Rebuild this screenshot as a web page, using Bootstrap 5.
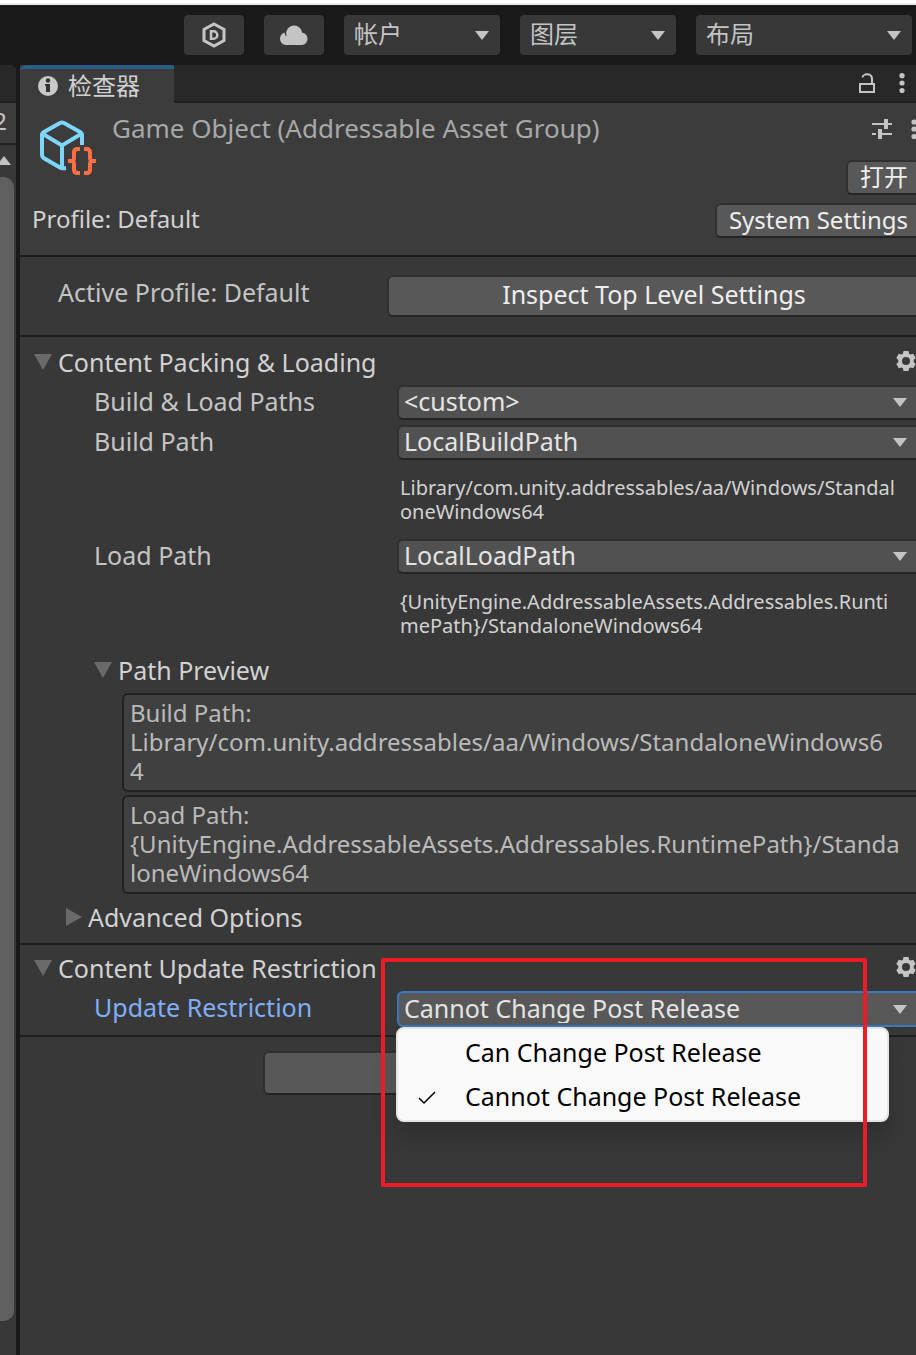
<!DOCTYPE html>
<html lang="zh-CN">
<head>
<meta charset="utf-8">
<meta name="viewport" content="width=device-width, initial-scale=1">
<title>检查器</title>
<link href="https://cdn.jsdelivr.net/npm/bootstrap@5.3.0/dist/css/bootstrap.min.css" rel="stylesheet">
<style>
  body {
    background: #191919;
    color: #d2d2d2;
    font-family: "Noto Sans", "Noto Sans CJK SC", sans-serif;
    font-size: 24px;
    line-height: 30px;
    border-top: 3px solid #fff;
  }
  .app-toolbar { height: 62px; border-top: 2px solid #ececec; padding: 10px 4px 10px 0; gap: 20px; }
  .tool-btn { width: 60px; height: 40px; background: #383838; border: 0; border-radius: 4px; color: #c4c4c4; padding: 0; }
  .tool-select { width: 156px; height: 40px; border: 0; border-radius: 4px; color: #c4c4c4; padding: 0 10px 2px; }
  .tool-select.last-tool { width: 216px; }
  select {
    appearance: none;
    background: #383838 url("data:image/svg+xml,%3Csvg xmlns='http://www.w3.org/2000/svg' width='14' height='9'%3E%3Cpath d='M0 0h14L7 9z' fill='%23c4c4c4'/%3E%3C/svg%3E") no-repeat right 11px center;
  }
  .icon-btn { background: none; border: 0; padding: 0; color: #c4c4c4; line-height: 0; }

  .side-pane { width: 16px; background: #383838; border-radius: 0 6px 0 0; overflow: hidden; }
  .side-head { height: 38px; background: #282828; border-bottom: 2px solid #212121; }
  .side-count { height: 42px; background: #3c3c3c; border-bottom: 2px solid #212121; color: #c4c4c4; line-height: 36px; direction: rtl; padding-right: 9px; }
  .side-arrow { height: 32px; padding-top: 11px; line-height: 0; }
  .side-thumb { height: 1144px; background: #5f5f5f; border-radius: 0 10px 10px 0; margin-right: 2px; }

  .inspector { background: #383838; min-width: 0; margin-left: 4px; }
  .tab-strip { height: 38px; background: #282828; border-bottom: 2px solid #212121; padding-right: 11px; border-radius: 6px 0 0 0; }
  .tab-item { height: 38px; margin-bottom: -2px; background: #3c3c3c; border: 0; border-top: 4px solid #2c5d87; border-radius: 6px 2px 0 0; color: #d2d2d2; padding: 0 34px 0 18px; gap: 10px; }
  .asset-head { background: #3c3c3c; border-bottom: 2px solid #1a1a1a; height: 154px; padding: 11px 0 0 12px; }
  .asset-title { font-size: 26px; line-height: 28px; color: #a8a8a8; margin: 0; font-weight: 400; }
  .title-row { height: 30px; margin-bottom: 16px; }
  .head-gap { gap: 16px; }
  .profile-line { margin-top: 8px; line-height: 32px; }
  .u-btn { background: #585858; border: 2px solid #303030; border-bottom-color: #242424; border-right: 0; border-radius: 6px 0 0 6px; color: #eee; padding: 0 8px 2px 12px; line-height: 29px; height: 35px; }
  .profile-row { border-bottom: 2px solid #1f1f1f; height: 80px; padding: 18px 0 0 38px; font-size: 25px; }
  .profile-name { width: 329px; line-height: 34px; }
  .wide-btn { height: 42px; padding: 0 0 4px 3px; }
  .dim { color: #c4c4c4; }
  .group { border-bottom: 2px solid #1f1f1f; padding-top: 10px; font-size: 25px; }
  .group.update-group { padding: 8px 0 3px; }
  .fold { background: none; border: 0; padding: 0; color: #d2d2d2; text-align: left; line-height: 30px; gap: 6px; }
  .fold-row { padding-left: 14px; height: 38px; align-items: flex-start; }
  .field-row { display: grid; grid-template-columns: 303px minmax(0, 1fr); padding-left: 74px; margin-bottom: 5px; }
  .field-row label { line-height: 32px; }
  .u-select { display: block; width: 100%; height: 35px; border: 2px solid #303030; border-bottom-color: #242424; border-right: 0; border-radius: 6px 0 0 6px; background-color: #515151; background-position: right 9px center; color: #e4e4e4; padding: 0 0 2px 5px; line-height: 29px; }
  .u-select.active-field, .u-select.active-field:focus { height: 36px; border-color: #3a79bb; background-color: #585858; outline: 0; }
  .note { font-size: 20px; line-height: 24px; padding: 16px 0 0 3px; margin: 0 0 10px; }
  .preview-title { padding: 2px 0 8px 74px; }
  .preview-list { padding-left: 102px; }
  .preview-box { display: block; width: 100%; height: 99px; font-size: 24px; background: #404040; border: 2px solid #212121; border-right: 0; border-radius: 6px 0 0 6px; color: #bababa; padding: 3px 0 0 6px; line-height: 29px; resize: none; overflow: hidden; margin-bottom: 3px; }
  .adv-row { padding: 5px 0 11px 46px; }
  .link-label { color: #7faef7; }
  .popup { position: absolute; left: -1px; top: 36px; z-index: 2; width: 493px; background: #f9f9f9; border: 2px solid #e4e4e4; border-radius: 8px; padding: 1px 0 2px; margin: 0; list-style: none; box-shadow: 0 14px 24px rgba(0,0,0,.18); }
  .popup button { display: flex; align-items: center; width: 100%; height: 44px; background: none; border: 0; color: #000; padding: 0 0 0 18px; gap: 27px; }
  .popup svg { width: 22px; }
  .marker { position: absolute; left: -16px; top: -33px; z-index: 3; width: 486px; height: 229px; border: 4px solid #ed1c24; border-radius: 2px; pointer-events: none; }
  .schema-btn { display: block; width: 410px; height: 44px; border-right: 2px solid #303030; border-radius: 6px; margin: 14px auto 0; }
</style>
</head>
<body class="d-flex flex-column min-vh-100 overflow-hidden">
<svg class="d-none">
  <symbol id="gear" viewBox="0 0 20 20"><path fill="currentColor" fill-rule="evenodd" d="M7.500 0h5l.6 2.800 1.300.8L17.200 2.700l2.500 4.300-2 2v2l2 2-2.500 4.300-2.800-.9-1.300.8-.6 2.800h-5l-.6-2.800-1.300-.8-2.800.9L.300 13l2-2V9l-2-2 2.500-4.300 2.800.9 1.300-.8zM10 6a4 4 0 1 0 0 8 4 4 0 0 0 0-8z"/></symbol>
  <symbol id="dots" viewBox="0 0 6 20"><g fill="currentColor"><circle cx="3" cy="2.700" r="2.600"/><circle cx="3" cy="10" r="2.600"/><circle cx="3" cy="17.500" r="2.600"/></g></symbol>
  <symbol id="down" viewBox="0 0 18 16"><path fill="#6a6a6a" d="M0 0h18L9 16z"/></symbol>
</svg>

<header class="app-toolbar d-flex justify-content-end flex-shrink-0">
  <button class="tool-btn d-flex align-items-center justify-content-center" type="button" aria-label="D">
    <svg width="24" height="26" viewBox="0 0 24 26" fill="none" stroke="currentColor"><path stroke-width="3" d="M12 2l10 5.500v11L12 24 2 18.500v-11z"/><path stroke-width="2.500" d="M9 9.200h2.500a3.800 3.800 0 0 1 0 7.600H9z"/></svg>
  </button>
  <button class="tool-btn d-flex align-items-center justify-content-center" type="button" aria-label="Cloud">
    <svg width="28" height="20" viewBox="0 0 28 20"><path fill="currentColor" d="M6 20a6 6 0 0 1-6-6c0-3 1.500-5.500 4.500-6.500.3 2 1 3 2 4C6.500 10 6 8.500 6.200 7A8 8 0 0 1 22 7.500 6.300 6.300 0 0 1 22 20z"/></svg>
  </button>
  <select class="tool-select" aria-label="帐户"><option>帐户</option></select>
  <select class="tool-select" aria-label="图层"><option>图层</option></select>
  <select class="tool-select last-tool" aria-label="布局"><option>布局</option></select>
</header>

<div class="d-flex flex-grow-1">
  <aside class="side-pane flex-shrink-0">
    <div class="side-head"></div>
    <div class="side-count">2</div>
    <div class="side-arrow"><svg width="12" height="9"><path fill="#c4c4c4" d="M-3 9L4 0l7 9z"/></svg></div>
    <div class="side-thumb"></div>
  </aside>

  <main class="inspector flex-grow-1">
    <div class="tab-strip d-flex">
      <button class="tab-item d-flex align-items-center" type="button">
        <svg width="20" height="20" viewBox="0 0 20 20"><circle cx="10" cy="10" r="10" fill="#c9c9c9"/><circle cx="10" cy="4.500" r="2.200" fill="#333"/><path fill="#333" d="M7 8h5v8H8v-6H7z"/></svg>
        检查器
      </button>
      <div class="d-flex align-items-center ms-auto gap-4">
        <button class="icon-btn" type="button" aria-label="Lock"><svg width="16" height="20" viewBox="0 0 16 20" fill="none" stroke="currentColor" stroke-width="2"><path d="M1 11h14v8H1zM13 11V6c0-6-9-6-9.500-1.500"/></svg></button>
        <button class="icon-btn" type="button" aria-label="Menu"><svg width="6" height="20"><use href="#dots"/></svg></button>
      </div>
    </div>

    <section class="asset-head">
      <div class="d-flex head-gap">
        <svg width="64" height="64" viewBox="0 0 64 64" fill="none" class="flex-shrink-0">
          <path d="M50 31V20.500q0-1.500-1.500-2.300L32 9q-2-1-4 0L11.500 18.200Q10 19 10 20.500V41q0 2 2 3.300L28 53.500q1.500 1 6 .5M11 20l19 11.500L49 20M30 31.500V53" stroke="#7fd6fd" stroke-width="4"/>
          <path d="M48 35h-2.500q-3.500 0-3.500 3.500V44q0 3-3 3h-3 3q3 0 3 3v5.500q0 3.500 3.500 3.500H48M52 35h2.500q3.500 0 3.500 3.500V44q0 3 3 3h3-3q-3 0-3 3v5.500q0 3.500-3.500 3.500H52" stroke="#ff6e40" stroke-width="4"/>
        </svg>
        <div class="flex-grow-1">
          <div class="title-row d-flex justify-content-between">
            <h1 class="asset-title">Game Object (Addressable Asset Group)</h1>
            <div class="d-flex align-items-center head-gap">
              <button class="icon-btn" type="button" aria-label="Presets"><svg width="24" height="22" viewBox="0 0 24 22" fill="none" stroke="currentColor" stroke-width="2"><path d="M1 6h12M16 6h5M1 16h4M9 16h12"/><path stroke-width="4" d="M15 1v10M9 11v10"/></svg></button>
              <button class="icon-btn" type="button" aria-label="More"><svg width="5" height="20" viewBox="0 0 5 20"><g fill="currentColor"><circle cx="3" cy="3" r="2.600"/><circle cx="3" cy="10" r="2.600"/><circle cx="3" cy="17.500" r="2.600"/></g></svg></button>
            </div>
          </div>
          <div class="d-flex justify-content-end"><button class="u-btn" type="button">打开</button></div>
        </div>
      </div>
      <div class="profile-line d-flex justify-content-between"><span>Profile: Default</span><button class="u-btn" type="button">System Settings</button></div>
    </section>

    <section class="profile-row d-flex">
      <span class="dim profile-name flex-shrink-0">Active Profile: Default</span>
      <button class="u-btn wide-btn flex-grow-1" type="button">Inspect Top Level Settings</button>
    </section>

    <section class="group">
      <div class="fold-row d-flex justify-content-between">
        <button class="fold d-flex align-items-center" type="button"><svg width="18" height="16"><use href="#down"/></svg>Content Packing &amp; Loading</button>
        <button class="icon-btn pt-1" type="button" aria-label="Settings"><svg width="20" height="20"><use href="#gear"/></svg></button>
      </div>
      <div class="field-row"><label class="dim" for="paths">Build &amp; Load Paths</label><select class="u-select" id="paths"><option>&lt;custom&gt;</option></select></div>
      <div class="field-row"><label class="dim" for="bp">Build Path</label><div><select class="u-select" id="bp"><option>LocalBuildPath</option></select>
        <p class="note">Library/com.unity.addressables/aa/Windows/Standal<br>oneWindows64</p></div></div>
      <div class="field-row"><label class="dim" for="lp">Load Path</label><div><select class="u-select" id="lp"><option>LocalLoadPath</option></select>
        <p class="note">{UnityEngine.AddressableAssets.Addressables.Runti<br>mePath}/StandaloneWindows64</p></div></div>
      <div class="preview-title"><button class="fold d-flex align-items-center" type="button"><svg width="18" height="16"><use href="#down"/></svg>Path Preview</button></div>
      <div class="preview-list">
        <textarea class="preview-box" readonly aria-label="Build Path">Build Path:
Library/com.unity.addressables/aa/Windows/StandaloneWindows6
4</textarea>
        <textarea class="preview-box" readonly aria-label="Load Path">Load Path:
{UnityEngine.AddressableAssets.Addressables.RuntimePath}/Standa
loneWindows64</textarea>
      </div>
      <div class="adv-row"><button class="fold d-flex align-items-center" type="button"><svg width="16" height="18"><path fill="#6a6a6a" d="M0 0l16 9-16 9z"/></svg>Advanced Options</button></div>
    </section>

    <section class="group update-group">
      <div class="fold-row d-flex justify-content-between">
        <button class="fold d-flex align-items-center" type="button"><svg width="18" height="16"><use href="#down"/></svg>Content Update Restriction</button>
        <button class="icon-btn pt-1" type="button" aria-label="Settings"><svg width="20" height="20"><use href="#gear"/></svg></button>
      </div>
      <div class="field-row"><label class="link-label" for="ur">Update Restriction</label>
        <div class="position-relative">
          <select class="u-select active-field" id="ur"><option>Cannot Change Post Release</option></select>
          <ul class="popup">
            <li><button type="button"><svg height="18"></svg>Can Change Post Release</button></li>
            <li><button type="button"><svg height="18" viewBox="0 0 22 18" fill="none" stroke="#000" stroke-width="1.500"><path d="M3 11l5 5L19 5"/></svg>Cannot Change Post Release</button></li>
          </ul>
          <div class="marker"></div>
        </div>
      </div>
    </section>
    <button class="u-btn schema-btn" type="button" aria-label="Add Schema"></button>
  </main>
</div>
<script src="https://cdn.jsdelivr.net/npm/bootstrap@5.3.0/dist/js/bootstrap.bundle.min.js"></script>
</body>
</html>
